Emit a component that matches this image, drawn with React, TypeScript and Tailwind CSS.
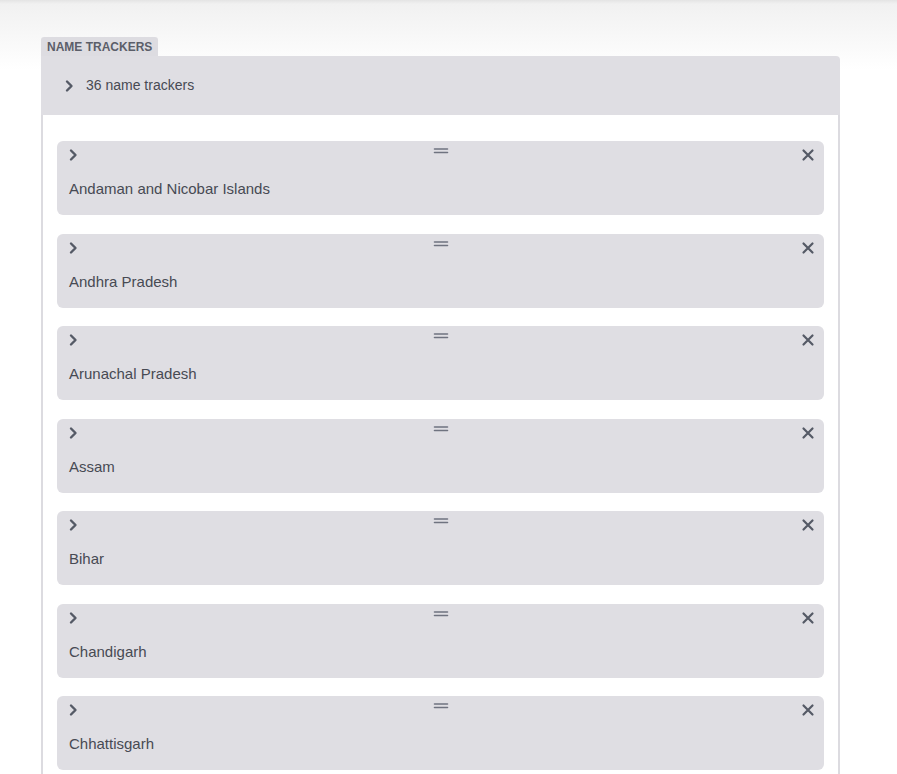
import React from "react";

const items = [
  "Andaman and Nicobar Islands",
  "Andhra Pradesh",
  "Arunachal Pradesh",
  "Assam",
  "Bihar",
  "Chandigarh",
  "Chhattisgarh",
];

const Chevron: React.FC = () => (
  <svg width="10" height="14" viewBox="0 0 10 14" fill="none">
    <path d="M2 2.5 L6.5 7 L2 11.5" stroke="#555a66" strokeWidth="2.4" strokeLinecap="round" strokeLinejoin="round" />
  </svg>
);

const Close: React.FC = () => (
  <svg width="14" height="14" viewBox="0 0 14 14" fill="none">
    <path d="M2.5 2.5 L11.5 11.5 M11.5 2.5 L2.5 11.5" stroke="#555a66" strokeWidth="2.2" strokeLinecap="round" />
  </svg>
);

const Handle: React.FC = () => (
  <svg width="16" height="8" viewBox="0 0 16 8" fill="none">
    <path d="M1.5 2 H14.5 M1.5 5.5 H14.5" stroke="#6f7380" strokeWidth="1.6" strokeLinecap="round" />
  </svg>
);

const TrackerCard: React.FC<{ name: string }> = ({ name }) => (
  <div className="rounded-md bg-[#dfdee3] px-3 pt-[6px] pb-4">
    <div className="grid h-4 grid-cols-[1fr_auto_1fr] items-start">
      <div className="pt-[1px]">
        <Chevron />
      </div>
      <div className="mt-[0px]">
        <Handle />
      </div>
      <div className="flex justify-end pt-[1px] -mr-[3px]">
        <Close />
      </div>
    </div>
    <div className="mt-[16px] text-[15px] leading-5 text-[#474a53]">{name}</div>
  </div>
);

export default function App() {
  return (
    <div className="h-[774px] w-full overflow-hidden bg-[linear-gradient(to_bottom,#e4e4e4_0px,#f1f1f1_4px,#ffffff_70px)] font-['Liberation_Sans',Arial,sans-serif]">
      <div className="ml-[41px] w-[799px] pt-[37px]">
        <div className="flex h-[19px] w-fit items-center rounded-t-[3px] bg-[#dddce1] px-[6px] text-[12px] font-bold leading-[14px] text-[#5b5e69]">
          NAME TRACKERS
        </div>
        <div className="flex h-[59px] items-center gap-[11px] rounded-tr-[4px] bg-[#dfdee3] pl-[24px] text-[14px] text-[#474a53]">
          <Chevron />
          <span>36 name trackers</span>
        </div>
        <div className="flex flex-col gap-[18.5px] border-x-2 border-[#dcdbe0] bg-white px-[14px] pt-[26px] pb-6">
          {items.map((n) => (
            <TrackerCard key={n} name={n} />
          ))}
        </div>
      </div>
    </div>
  );
}
